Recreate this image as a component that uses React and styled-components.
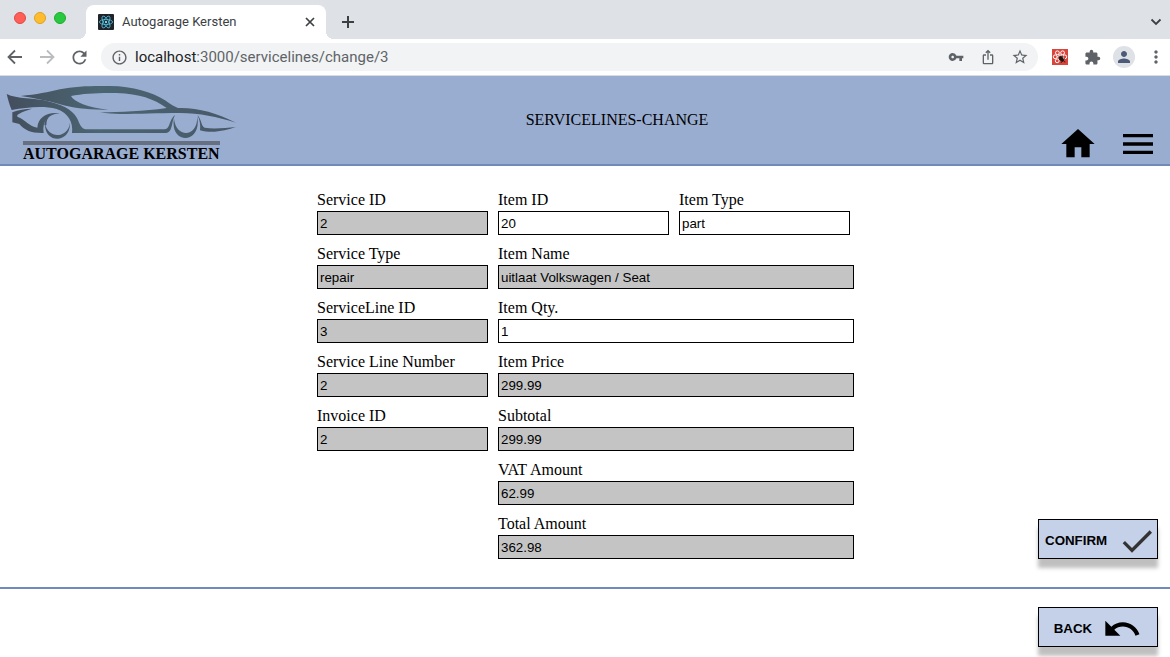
import React from "react";
import styled, { createGlobalStyle } from "styled-components";
import {
  MdRefresh, MdInfoOutline, MdVpnKey, MdIosShare, MdStarBorder, MdExtension,
  MdPerson, MdMoreVert, MdHome, MdMenu, MdDone, MdUndo,
} from "react-icons/md";

const Global = createGlobalStyle`
  * { box-sizing: border-box; }
  body { margin: 0; background: #fff; color: #000; font-family: "Liberation Serif", "Times New Roman", serif; font-size: 16px; }
  button { cursor: pointer; }
`;

const Page = styled.div`
  display: flex;
  flex-direction: column;
  height: 100vh;
  overflow: hidden;
`;

const TabStrip = styled.div`
  display: flex;
  align-items: flex-end;
  flex: none;
  height: 39px;
  background: #dee1e6;
  font-family: Roboto, sans-serif;
`;

const WindowControls = styled.div`
  display: flex;
  gap: 8px;
  padding: 0 20px 15px 14px;
`;

const Light = styled.button`
  width: 12px;
  height: 12px;
  padding: 0;
  border: 1px solid ${(p) => p.$edge};
  border-radius: 50%;
  background: ${(p) => p.$fill};
`;

const Tab = styled.div`
  position: relative;
  display: flex;
  align-items: center;
  width: 240px;
  height: 34px;
  padding: 0 6px 0 12px;
  background: #fff;
  border-radius: 8px 8px 0 0;
  color: #3c4043;
  font-size: 13px;
  &::before, &::after {
    content: "";
    position: absolute;
    bottom: 0;
    width: 8px;
    height: 8px;
  }
  &::before { left: -8px; background: radial-gradient(circle at 0 0, transparent 8px, #fff 8px); }
  &::after { right: -8px; background: radial-gradient(circle at 100% 0, transparent 8px, #fff 8px); }
`;

const TabTitle = styled.span`
  flex: 1;
  margin-left: 8px;
  padding-bottom: 2px;
`;

const IconButton = styled.button`
  display: grid;
  place-items: center;
  flex: none;
  width: ${(p) => p.$size || 20}px;
  height: ${(p) => p.$size || 20}px;
  padding: 0;
  border: 0;
  border-radius: 50%;
  background: ${(p) => p.$fill || "transparent"};
  color: ${(p) => p.$tone || "#5f6368"};
`;

const NewTab = styled.div`
  flex: 1;
  padding: 0 12px 7px;
`;

const TabSearch = styled.div`
  padding: 0 4px 7px;
`;

const Toolbar = styled.div`
  display: flex;
  align-items: center;
  flex: none;
  height: 37px;
  padding: 0 4px 0 5px;
  border-bottom: 1px solid #dadce0;
  background: #fff;
`;

const NavButtons = styled.div`
  display: flex;
  gap: 12px;
`;

const AddressBar = styled.div`
  display: flex;
  align-items: center;
  flex: 1;
  gap: 12px;
  height: 28px;
  margin: 0 11px 0 12px;
  padding: 0 8px;
  border-radius: 14px;
  background: #f1f3f4;
`;

const Address = styled.span`
  flex: 1;
  margin-left: -6px;
  color: #5f6368;
  font-family: Roboto, sans-serif;
  font-size: 15px;
`;

const Host = styled.span`
  color: #202124;
`;

const Extensions = styled.div`
  display: flex;
  align-items: center;
  gap: 11px;
`;

const Header = styled.header`
  display: grid;
  grid-template-columns: 1fr auto 1fr;
  flex: none;
  height: 90px;
  border-bottom: 2px solid #6f8abb;
  background: #99add1;
`;

const Brand = styled.a`
  display: flex;
  flex-direction: column;
  align-items: flex-start;
  padding: 6px 0 0 5px;
  color: #000;
  text-decoration: none;
`;

const BrandName = styled.span`
  margin-left: 18px;
  border-top: 4px solid #667080;
  font-weight: bold;
  line-height: 18px;
`;

const Title = styled.h1`
  margin: 0;
  padding-left: 64px;
  align-self: center;
  font-size: 16px;
  font-weight: normal;
`;

const HeaderNav = styled.nav`
  display: flex;
  align-items: flex-end;
  justify-content: flex-end;
  gap: 20px;
  padding-right: 12px;
`;

const NavButton = styled.button`
  display: flex;
  padding: 0;
  border: 0;
  background: none;
  color: #000;
`;

const Main = styled.main`
  display: grid;
  grid-template-columns: 1fr auto 1fr;
  flex: none;
  padding: 25px 0 28px;
  border-bottom: 2px solid #6f8abb;
`;

const Form = styled.form`
  display: grid;
  grid-template-columns: 171px 171px 175px;
  gap: 10px;
  grid-column: 2;
  padding-left: 1px;
`;

const FieldBox = styled.div`
  display: flex;
  flex-direction: column;
  gap: 2px;
  grid-column: ${(p) => p.$column};
`;

const Label = styled.label`
  line-height: 18px;
  white-space: nowrap;
`;

const Input = styled.input`
  width: ${(p) => (p.$wide ? "100%" : "171px")};
  height: 24px;
  padding: 1px 2px;
  border: 1px solid #000;
  border-radius: 0;
  background: ${(p) => (p.readOnly ? "#c4c4c4" : "#fff")};
  color: #000;
  font-family: "Liberation Sans", Arial, sans-serif;
`;

const Actions = styled.div`
  display: flex;
  align-items: flex-end;
  justify-content: flex-end;
  padding-right: 12px;
`;

const Footer = styled.footer`
  display: flex;
  justify-content: flex-end;
  padding: 18px 12px;
`;

const ActionButton = styled.button`
  display: flex;
  align-items: center;
  justify-content: safe center;
  gap: 10px;
  width: 120px;
  height: 40px;
  padding: 3px 6px 0;
  border: 1px solid #000;
  background: #c4d1e9;
  box-shadow: 0 9px 4px rgba(0, 0, 0, 0.25);
  color: #000;
  font-family: "Liberation Sans", Arial, sans-serif;
  font-weight: bold;
  svg { flex: none; }
`;

const fields = [
  { id: "serviceId", label: "Service ID", value: "2", column: "1", locked: true },
  { id: "itemId", label: "Item ID", value: "20", column: "2" },
  { id: "itemType", label: "Item Type", value: "part", column: "3" },
  { id: "serviceType", label: "Service Type", value: "repair", column: "1", locked: true },
  { id: "itemName", label: "Item Name", value: "uitlaat Volkswagen / Seat", column: "2 / 4", locked: true },
  { id: "serviceLineId", label: "ServiceLine ID", value: "3", column: "1", locked: true },
  { id: "itemQty", label: "Item Qty.", value: "1", column: "2 / 4" },
  { id: "lineNumber", label: "Service Line Number", value: "2", column: "1", locked: true },
  { id: "itemPrice", label: "Item Price", value: "299.99", column: "2 / 4", locked: true },
  { id: "invoiceId", label: "Invoice ID", value: "2", column: "1", locked: true },
  { id: "subtotal", label: "Subtotal", value: "299.99", column: "2 / 4", locked: true },
  { id: "vat", label: "VAT Amount", value: "62.99", column: "2 / 4", locked: true },
  { id: "total", label: "Total Amount", value: "362.98", column: "2 / 4", locked: true },
];

function Field({ id, label, value, column, locked }) {
  return (
    <FieldBox $column={column}>
      <Label htmlFor={id}>{label}</Label>
      <Input id={id} defaultValue={value} readOnly={locked} $wide={column.includes("/")} />
    </FieldBox>
  );
}

// Thin line glyph for the browser controls, on a 20 unit grid.
function LineGlyph({ d, weight = 2 }) {
  return (
    <svg width="20" height="20" viewBox="0 0 20 20" fill="none" stroke="currentColor" strokeWidth={weight} aria-hidden="true">
      <path d={d} />
    </svg>
  );
}

function ReactMark() {
  return (
    <svg width="16" height="16" viewBox="0 0 16 16" aria-hidden="true">
      <rect width="16" height="16" rx="1" fill="#20232a" />
      <g fill="none" stroke="#53c1de" strokeWidth="0.8">
        <ellipse cx="8" cy="8" rx="6.6" ry="2.6" />
        <ellipse cx="8" cy="8" rx="6.6" ry="2.6" transform="rotate(60 8 8)" />
        <ellipse cx="8" cy="8" rx="6.6" ry="2.6" transform="rotate(120 8 8)" />
      </g>
      <circle cx="8" cy="8" r="1.2" fill="#61dafb" />
    </svg>
  );
}

function BugExtension() {
  return (
    <svg width="16" height="16" viewBox="0 0 16 16" aria-hidden="true">
      <rect width="16" height="16" fill="#d9453a" />
      <g fill="none" stroke="#fff" strokeWidth="1">
        <circle cx="5.4" cy="3.8" r="1.9" />
        <circle cx="10.6" cy="3.8" r="1.9" />
        <circle cx="3.2" cy="7.8" r="1.9" />
        <circle cx="12.8" cy="7.8" r="1.9" />
        <circle cx="5.2" cy="11.8" r="1.9" />
        <path d="M6 6l4 0M5 8l3-1" />
      </g>
      <ellipse cx="9.5" cy="10" rx="1.9" ry="3.2" transform="rotate(-35 9.5 10)" fill="#1d1414" />
      <path d="M6.5 7.5l1.5.5M7 10.5l1.500 0M10.5 7l.5 1.5M12 9.5l1 .5M9 13l.5 1M12.5 12l.5 1.5" stroke="#1d1414" strokeWidth="0.8" />
    </svg>
  );
}

function CarLogo() {
  return (
    <svg width="234" height="59" viewBox="15 6 702 177" aria-hidden="true">
      <defs>
        <linearGradient id="body" gradientUnits="userSpaceOnUse" x1="20" y1="0" x2="710" y2="0">
          <stop offset="0" stopColor="#434e5d" />
          <stop offset="0.4" stopColor="#4b6572" />
          <stop offset="1" stopColor="#485868" />
        </linearGradient>
      </defs>
      <g fill="url(#body)">
        <path d="M62 48 C110 44 145 36 180 28 C225 18 280 17 330 18 C400 19 455 36 495 61 C512 73 524 81 534 84 C590 82 650 98 708 128 C650 110 600 100 540 99 C470 99 420 102 360 102 C340 102 320 100 300 97 C360 96 430 94 500 84 C460 56 420 42 350 39 C300 38 250 40 213 48 C222 66 262 82 326 89 C270 91 220 84 180 73 C140 61 100 54 62 48 Z" />
        <path d="M20 42 C50 58 105 52 150 65 C200 78 224 96 234 120 C240 136 245 145 256 148 L494 148 C512 146 506 118 526 104 C513 124 520 156 498 159 L216 159 C220 128 206 100 170 87 C130 76 80 82 35 90 C28 74 24 58 20 42 Z" />
        <path d="M37 97 C55 90 75 86 96 86 C78 92 60 98 52 105 L52 110 C76 118 88 140 112 143 C114 112 142 94 180 100 C144 102 126 124 131 159 C94 160 72 150 58 132 L37 127 Z" />
        <path d="M135 130 C132 192 213 192 210 128 C204 177 142 177 135 130 Z" />
        <path d="M133 136 A38 38 0 0 1 152 104 A42 42 0 0 0 139 136 Z" />
        <path d="M522 116 C508 193 606 195 592 110 C592 174 528 174 522 116 Z" />
        <path d="M592 106 C606 118 602 138 614 143 C640 148 675 144 708 141 C680 150 640 162 600 151 C602 136 600 120 592 106 Z" />
      </g>
    </svg>
  );
}

export default function App() {
  return (
    <Page>
      <Global />
      <TabStrip>
        <WindowControls>
          <Light aria-label="Close window" $fill="#ff5f57" $edge="#e14942" />
          <Light aria-label="Minimise window" $fill="#ffbd2e" $edge="#dfa023" />
          <Light aria-label="Zoom window" $fill="#28c840" $edge="#1dad2b" />
        </WindowControls>
        <Tab>
          <ReactMark />
          <TabTitle>Autogarage Kersten</TabTitle>
          <IconButton $tone="#3c4043" aria-label="Close tab"><LineGlyph weight={1.7} d="M6 6l8 8M14 6l-8 8" /></IconButton>
        </Tab>
        <NewTab>
          <IconButton $tone="#3c4043" aria-label="New tab"><LineGlyph d="M10 4v12M4 10h12" /></IconButton>
        </NewTab>
        <TabSearch>
          <IconButton $tone="#3c4043" aria-label="Search tabs"><LineGlyph weight={1.8} d="M5.5 7.500l4.500 4.500L14.500 7.500" /></IconButton>
        </TabSearch>
      </TabStrip>
      <Toolbar>
        <NavButtons>
          <IconButton aria-label="Back in history"><LineGlyph weight={1.8} d="M17 10H4M10 3.5L3.5 10l6.5 6.5" /></IconButton>
          <IconButton aria-label="Forward in history" $tone="#babcbe"><LineGlyph weight={1.8} d="M3 10h13M10 3.5l6.5 6.5-6.5 6.5" /></IconButton>
          <IconButton aria-label="Reload"><MdRefresh size={21} /></IconButton>
        </NavButtons>
        <AddressBar>
          <IconButton aria-label="Site information"><MdInfoOutline size={17} /></IconButton>
          <Address><Host>localhost</Host>:3000/servicelines/change/3</Address>
          <IconButton aria-label="Passwords"><MdVpnKey size={16} /></IconButton>
          <IconButton aria-label="Share"><MdIosShare size={16} /></IconButton>
          <IconButton aria-label="Bookmark"><MdStarBorder size={18} /></IconButton>
        </AddressBar>
        <Extensions>
          <IconButton aria-label="Bug extension" $size={22}><BugExtension /></IconButton>
          <IconButton aria-label="Extensions"><MdExtension size={17} /></IconButton>
          <IconButton aria-label="Profile" $size={22} $fill="#dee1e6"><MdPerson size={18} color="#4c5a78" /></IconButton>
          <IconButton aria-label="Menu"><MdMoreVert size={20} /></IconButton>
        </Extensions>
      </Toolbar>
      <Header>
        <Brand href="#home">
          <CarLogo />
          <BrandName>AUTOGARAGE KERSTEN</BrandName>
        </Brand>
        <Title>SERVICELINES-CHANGE</Title>
        <HeaderNav>
          <NavButton aria-label="Home"><MdHome size={40} /></NavButton>
          <NavButton aria-label="Open menu"><MdMenu size={40} /></NavButton>
        </HeaderNav>
      </Header>
      <Main>
        <Form id="serviceline">
          {fields.map((f) => <Field key={f.id} {...f} />)}
        </Form>
        <Actions>
          <ActionButton type="submit" form="serviceline">
            CONFIRM
            <MdDone size={40} color="#333" />
          </ActionButton>
        </Actions>
      </Main>
      <Footer>
        <ActionButton type="button">
          BACK
          <MdUndo size={40} />
        </ActionButton>
      </Footer>
    </Page>
  );
}
